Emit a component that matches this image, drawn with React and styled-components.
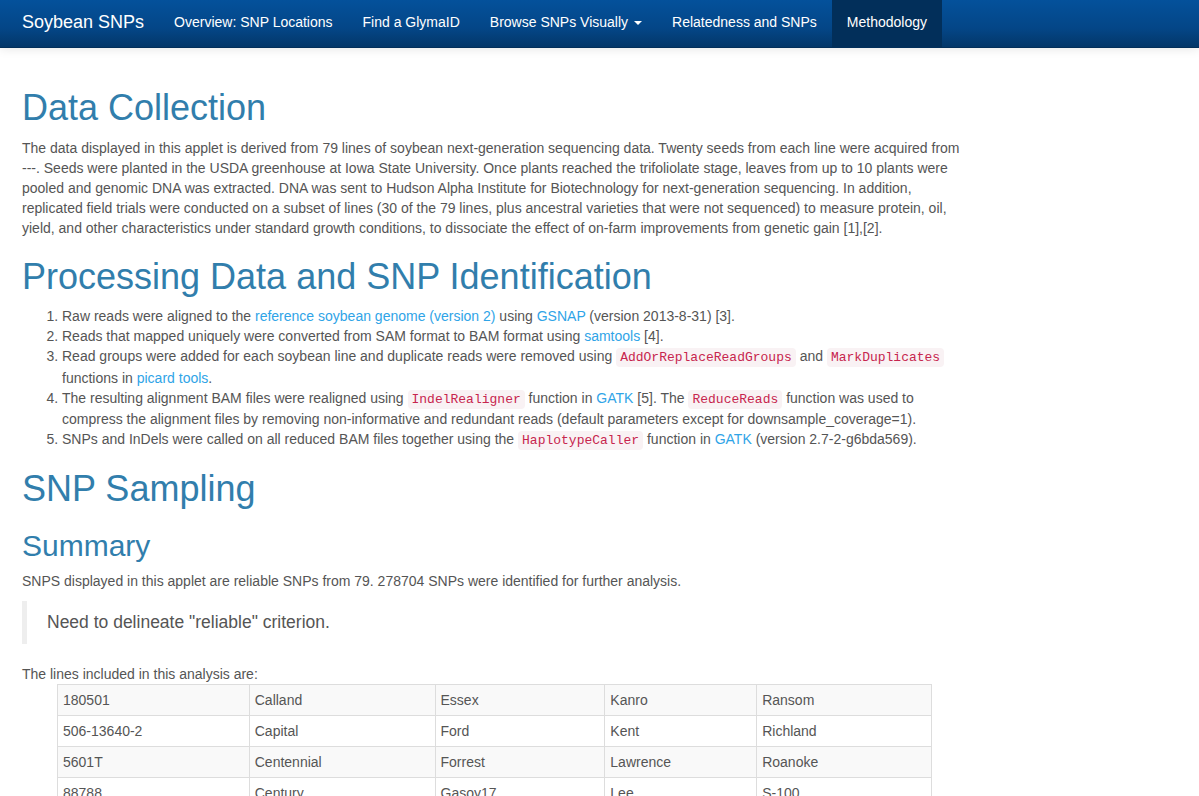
import React from "react";
import styled, { createGlobalStyle } from "styled-components";

const GlobalStyle = createGlobalStyle`
  html, body {
    margin: 0;
    padding: 0;
    background: #fff;
  }
  html::-webkit-scrollbar {
    width: 15px;
    background: #f1f1f1;
  }
  html::-webkit-scrollbar-track {
    background: #f1f1f1;
  }
  html::-webkit-scrollbar-thumb {
    background: #bcbcbc;
    border: 2px solid #f1f1f1;
    box-shadow: inset 0 0 0 1px #a9a9a9;
  }
  html::-webkit-scrollbar-button:single-button:vertical:decrement,
  html::-webkit-scrollbar-button:single-button:vertical:increment {
    display: block;
    height: 10px;
    background: #f1f1f1;
  }
  body {
    font-family: "Liberation Sans", Helvetica, Arial, sans-serif;
    font-size: 14px;
    line-height: 1.42857143;
    color: #555;
  }
  * { box-sizing: border-box; }
`;

const Navbar = styled.nav`
  display: flex;
  align-items: stretch;
  height: 48px;
  background-image: linear-gradient(#04519b, #044687 60%, #033769);
  border-bottom: 1px solid #022f5a;
  box-shadow: 0 1px 10px rgba(0, 0, 0, 0.1);
`;

const Brand = styled.a`
  display: block;
  padding: 0 15px 0 22px;
  font-size: 18px;
  line-height: 45px;
  color: #fff;
  text-decoration: none;
`;

const NavList = styled.ul`
  display: flex;
  margin: 0;
  padding: 0;
  list-style: none;
`;

const NavItem = styled.li`
  display: block;
  background: ${(p) => (p.$active ? "#022f5a" : "transparent")};
`;

const NavLink = styled.a`
  display: block;
  padding: 12px 15px 15px;
  line-height: 20px;
  font-size: 14px;
  color: #fff;
  text-decoration: none;
`;

const Caret = styled.span`
  display: inline-block;
  width: 0;
  height: 0;
  margin-left: 6px;
  vertical-align: middle;
  border-top: 4px solid #fff;
  border-left: 4px solid transparent;
  border-right: 4px solid transparent;
`;

const Main = styled.main`
  width: 967px;
  padding: 21px 0 40px 22px;
`;

const H1 = styled.h1`
  margin: ${(p) => (p.$afterList ? "18px" : "19px")} 0 10px;
  font-size: 36px;
  font-weight: 500;
  line-height: 1.1;
  color: #317eac;
`;

const H2 = styled.h2`
  margin: 21px 0 9px;
  font-size: 30px;
  font-weight: 500;
  line-height: 1.1;
  color: #317eac;
`;

const Para = styled.p`
  margin: 0 0 ${(p) => (p.$tight ? "0" : "10px")};
`;

const Link = styled.a`
  color: #2fa4e7;
  text-decoration: none;
`;

const Code = styled.code`
  padding: 2px 4px;
  font-size: 13px;
  font-family: "Liberation Mono", Menlo, Monaco, Consolas, "Courier New", monospace;
  color: #c7254e;
  background-color: #f9f2f4;
  border-radius: 4px;
`;

const OrderedList = styled.ol`
  margin: 0 0 10px;
  padding-left: 40px;
`;

const Quote = styled.blockquote`
  margin: 0 0 20px;
  padding: 10px 20px;
  border-left: 5px solid #eee;
  font-size: 17.5px;
  line-height: 23px;
`;

const LinesTable = styled.table`
  width: 875px;
  margin: 0 auto 20px;
  border-collapse: collapse;
  border-spacing: 0;
  border: 1px solid #ddd;
`;

const Row = styled.tr`
  background-color: ${(p) => (p.$odd ? "#f9f9f9" : "transparent")};
`;

const Cell = styled.td`
  padding: 5px;
  line-height: 20px;
  vertical-align: top;
  border: 1px solid #ddd;
`;

const PlotArea = styled.div`
  width: 100%;
  height: 700px;
  margin-bottom: 20px;
`;

const colWidths = [192, 186, 170, 152, 175];

const lines = [
  ["180501", "506-13640-2", "5601T", "88788", "A.K. (Harrow)", "Adams", "Amcor", "Amsoy 71", "Anderson", "Archer", "Beeson", "Bienville", "Blackhawk", "Bonus", "Bragg", "Burlison"],
  ["Calland", "Capital", "Centennial", "Century", "Chippewa", "Clark", "Corsoy", "Cumberland", "Dare", "Davis", "Dorman", "Dunfield", "Dwight", "Elgin", "Ellis", "Emerald"],
  ["Essex", "Ford", "Forrest", "Gasoy17", "Hamilton", "Hardin", "Harosoy", "Hawkeye", "Hill", "Hood", "Hutcheson", "Illini", "Jack", "Jackson", "Jefferson", "Kanawha"],
  ["Kanro", "Kent", "Lawrence", "Lee", "Lincoln", "Macon", "Manchu", "Mandarin", "Mukden", "N7103", "Ogden", "Peking", "Pella", "Perry", "Pickett", "Platte"],
  ["Ransom", "Richland", "Roanoke", "S-100", "Sanga", "Scott", "Shelby", "Stressland", "Tokyo", "Volstate", "Wabash", "Wayne", "Williams", "Williams 82", "Woodworth", ""],
];

const navItems = [
  { label: "Overview: SNP Locations" },
  { label: "Find a GlymaID" },
  { label: "Browse SNPs Visually", caret: true },
  { label: "Relatedness and SNPs" },
  { label: "Methodology", active: true },
];

export default function App() {
  const rows = lines[0].map((_, r) => lines.map((col) => col[r]));
  return (
    <>
      <GlobalStyle />
      <Navbar>
        <Brand href="#">Soybean SNPs</Brand>
        <NavList>
          {navItems.map((item) => (
            <NavItem key={item.label} $active={item.active}>
              <NavLink href="#">
                {item.label}
                {item.caret && <Caret />}
              </NavLink>
            </NavItem>
          ))}
        </NavList>
      </Navbar>
      <Main>
        <H1>Data Collection</H1>
        <Para>
          The data displayed in this applet is derived from 79 lines of soybean next-generation sequencing data. Twenty seeds from each line were acquired from ---. Seeds were planted in the USDA greenhouse at Iowa State University. Once plants reached the trifoliolate stage, leaves from up to 10 plants were pooled and genomic DNA was extracted. DNA was sent to Hudson Alpha Institute for Biotechnology for next-generation sequencing. In addition, replicated field trials were conducted on a subset of lines (30 of the 79 lines, plus ancestral varieties that were not sequenced) to measure protein, oil, yield, and other characteristics under standard growth conditions, to dissociate the effect of on-farm improvements from genetic gain [1],[2].
        </Para>

        <H1>Processing Data and SNP Identification</H1>
        <OrderedList>
          <li>
            Raw reads were aligned to the <Link href="#">reference soybean genome (version 2)</Link> using <Link href="#">GSNAP</Link> (version 2013-8-31) [3].
          </li>
          <li>
            Reads that mapped uniquely were converted from SAM format to BAM format using <Link href="#">samtools</Link> [4].
          </li>
          <li>
            Read groups were added for each soybean line and duplicate reads were removed using <Code>AddOrReplaceReadGroups</Code> and <Code>MarkDuplicates</Code> functions in <Link href="#">picard tools</Link>.
          </li>
          <li>
            The resulting alignment BAM files were realigned using <Code>IndelRealigner</Code> function in <Link href="#">GATK</Link> [5]. The <Code>ReduceReads</Code> function was used to compress the alignment files by removing non-informative and redundant reads (default parameters except for downsample_coverage=1).
          </li>
          <li>
            SNPs and InDels were called on all reduced BAM files together using the <Code>HaplotypeCaller</Code> function in <Link href="#">GATK</Link> (version 2.7-2-g6bda569).
          </li>
        </OrderedList>

        <H1 $afterList>SNP Sampling</H1>
        <H2>Summary</H2>
        <Para>SNPS displayed in this applet are reliable SNPs from 79. 278704 SNPs were identified for further analysis.</Para>
        <Quote>Need to delineate "reliable" criterion.</Quote>
        <Para $tight>The lines included in this analysis are:</Para>
        <LinesTable>
          <colgroup>
            {colWidths.map((w, i) => (
              <col key={i} style={{ width: w }} />
            ))}
          </colgroup>
          <tbody>
            {rows.map((row, i) => (
              <Row key={i} $odd={i % 2 === 0}>
                {row.map((name, j) => (
                  <Cell key={j}>{name}</Cell>
                ))}
              </Row>
            ))}
          </tbody>
        </LinesTable>

        <H2>SNP Density</H2>
        <Para>SNP density along each chromosome was computed in windows of 1 Mb.</Para>
        <PlotArea />
        <H2>Relatedness</H2>
        <Para>Pairwise relatedness between lines was estimated from the reliable SNP set.</Para>
        <PlotArea />

        <H1>References</H1>
        <OrderedList>
          <li>Fehr, W. R. (1984). Genetic contributions to yield gains of five major crop plants.</li>
          <li>Specht, J. E., et al. (1999). Soybean yield potential: a genetic and physiological perspective.</li>
          <li>Wu, T. D., &amp; Nacu, S. (2010). Fast and SNP-tolerant detection of complex variants and splicing in short reads.</li>
          <li>Li, H., et al. (2009). The Sequence Alignment/Map format and SAMtools.</li>
          <li>McKenna, A., et al. (2010). The Genome Analysis Toolkit.</li>
        </OrderedList>
      </Main>
    </>
  );
}
